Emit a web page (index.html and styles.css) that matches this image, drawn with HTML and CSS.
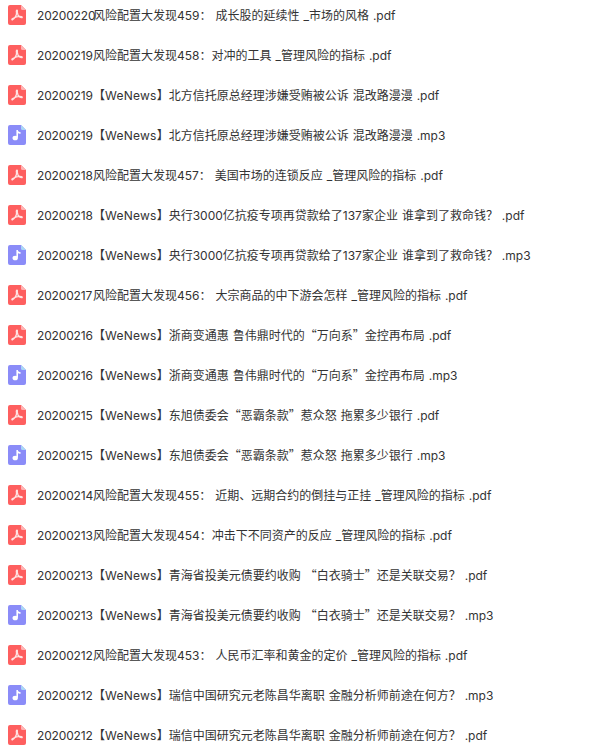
FILE: index.html
```html
<!DOCTYPE html>
<html lang="zh-CN">
<head>
    <meta charset="UTF-8">
    <meta name="viewport" content="width=device-width, initial-scale=1.0">
    <title>文件列表</title>
    <link rel="stylesheet" href="styles.css">
</head>
<body>
    <svg class="icon-defs" width="0" height="0">
        <symbol id="pdf-icon" viewBox="0 0 18 20">
            <path d="M2 0H13L18 5V18a2 2 0 0 1-2 2H2a2 2 0 0 1-2-2V2a2 2 0 0 1 2-2Z" fill="#fe5f5f"/>
            <path d="M13 0L18 5H14.5a1.5 1.5 0 0 1-1.5-1.5Z" fill="#ffb3b3"/>
            <path d="M9 5.2C8.3 5.2 8.2 6 8.5 7.6C8.7 8.8 8.2 10.4 7.3 11.9C6.4 13.4 5 14.6 4.2 15C3.6 14.6 3.8 14 4.7 13.5C6.5 12.6 9.5 11.4 11.6 11.4C13 11.4 14.3 11.8 14.2 12.4C14 12.9 12.9 12.7 12 12.2C10.6 11.3 9.4 9.4 9.3 7.4C9.3 6.4 9.6 5.2 9 5.2Z" fill="none" stroke="#ffe3e3" stroke-width="1.3" stroke-linejoin="round"/>
        </symbol>
        <symbol id="mp3-icon" viewBox="0 0 18 20">
            <path d="M2 0H13L18 5V18a2 2 0 0 1-2 2H2a2 2 0 0 1-2-2V2a2 2 0 0 1 2-2Z" fill="#8b8cf8"/>
            <path d="M13 0L18 5H14.5a1.5 1.5 0 0 1-1.5-1.5Z" fill="#a9d8f5"/>
            <path d="M9.2 5V12.4" stroke="#fff" stroke-width="1.6" fill="none"/>
            <path d="M9.2 5C10 6.6 11.4 6.8 12.6 7.2V8.8C11.4 8.6 10 8.2 9.2 7.4Z" fill="#fff"/>
            <ellipse cx="7.2" cy="13" rx="2.7" ry="2.3" fill="#fff"/>
        </symbol>
    </svg>

    <ul class="file-list">
        <li class="file-row"><svg class="file-icon"><use href="#pdf-icon"/></svg><span class="file-name"><span class="file-date">20200220</span>风险配置大发现459： 成长股的延续性 _市场的风格 .pdf</span></li>
        <li class="file-row"><svg class="file-icon"><use href="#pdf-icon"/></svg><span class="file-name"><span class="file-date">20200219</span>风险配置大发现458：对冲的工具 _管理风险的指标 .pdf</span></li>
        <li class="file-row"><svg class="file-icon"><use href="#pdf-icon"/></svg><span class="file-name"><span class="file-date">20200219</span>【<span class="tag">WeNews</span>】北方信托原总经理涉嫌受贿被公诉 混改路漫漫 .pdf</span></li>
        <li class="file-row"><svg class="file-icon"><use href="#mp3-icon"/></svg><span class="file-name"><span class="file-date">20200219</span>【<span class="tag">WeNews</span>】北方信托原总经理涉嫌受贿被公诉 混改路漫漫 .mp3</span></li>
        <li class="file-row"><svg class="file-icon"><use href="#pdf-icon"/></svg><span class="file-name"><span class="file-date">20200218</span>风险配置大发现457： 美国市场的连锁反应 _管理风险的指标 .pdf</span></li>
        <li class="file-row"><svg class="file-icon"><use href="#pdf-icon"/></svg><span class="file-name"><span class="file-date">20200218</span>【<span class="tag">WeNews</span>】央行3000亿抗疫专项再贷款给了137家企业 谁拿到了救命钱？ .pdf</span></li>
        <li class="file-row"><svg class="file-icon"><use href="#mp3-icon"/></svg><span class="file-name"><span class="file-date">20200218</span>【<span class="tag">WeNews</span>】央行3000亿抗疫专项再贷款给了137家企业 谁拿到了救命钱？ .mp3</span></li>
        <li class="file-row"><svg class="file-icon"><use href="#pdf-icon"/></svg><span class="file-name"><span class="file-date">20200217</span>风险配置大发现456： 大宗商品的中下游会怎样 _管理风险的指标 .pdf</span></li>
        <li class="file-row"><svg class="file-icon"><use href="#pdf-icon"/></svg><span class="file-name"><span class="file-date">20200216</span>【<span class="tag">WeNews</span>】浙商变通惠 鲁伟鼎时代的<span class="cjk-quote">“</span>万向系<span class="cjk-quote">”</span>金控再布局 .pdf</span></li>
        <li class="file-row"><svg class="file-icon"><use href="#mp3-icon"/></svg><span class="file-name"><span class="file-date">20200216</span>【<span class="tag">WeNews</span>】浙商变通惠 鲁伟鼎时代的<span class="cjk-quote">“</span>万向系<span class="cjk-quote">”</span>金控再布局 .mp3</span></li>
        <li class="file-row"><svg class="file-icon"><use href="#pdf-icon"/></svg><span class="file-name"><span class="file-date">20200215</span>【<span class="tag">WeNews</span>】东旭债委会<span class="cjk-quote">“</span>恶霸条款<span class="cjk-quote">”</span>惹众怒 拖累多少银行 .pdf</span></li>
        <li class="file-row"><svg class="file-icon"><use href="#mp3-icon"/></svg><span class="file-name"><span class="file-date">20200215</span>【<span class="tag">WeNews</span>】东旭债委会<span class="cjk-quote">“</span>恶霸条款<span class="cjk-quote">”</span>惹众怒 拖累多少银行 .mp3</span></li>
        <li class="file-row"><svg class="file-icon"><use href="#pdf-icon"/></svg><span class="file-name"><span class="file-date">20200214</span>风险配置大发现455： 近期、远期合约的倒挂与正挂 _管理风险的指标 .pdf</span></li>
        <li class="file-row"><svg class="file-icon"><use href="#pdf-icon"/></svg><span class="file-name"><span class="file-date">20200213</span>风险配置大发现454：冲击下不同资产的反应 _管理风险的指标 .pdf</span></li>
        <li class="file-row"><svg class="file-icon"><use href="#pdf-icon"/></svg><span class="file-name"><span class="file-date">20200213</span>【<span class="tag">WeNews</span>】青海省投美元债要约收购 <span class="cjk-quote">“</span>白衣骑士<span class="cjk-quote">”</span>还是关联交易？ .pdf</span></li>
        <li class="file-row"><svg class="file-icon"><use href="#mp3-icon"/></svg><span class="file-name"><span class="file-date">20200213</span>【<span class="tag">WeNews</span>】青海省投美元债要约收购 <span class="cjk-quote">“</span>白衣骑士<span class="cjk-quote">”</span>还是关联交易？ .mp3</span></li>
        <li class="file-row"><svg class="file-icon"><use href="#pdf-icon"/></svg><span class="file-name"><span class="file-date">20200212</span>风险配置大发现453： 人民币汇率和黄金的定价 _管理风险的指标 .pdf</span></li>
        <li class="file-row"><svg class="file-icon"><use href="#mp3-icon"/></svg><span class="file-name"><span class="file-date">20200212</span>【<span class="tag">WeNews</span>】瑞信中国研究元老陈昌华离职 金融分析师前途在何方？ .mp3</span></li>
        <li class="file-row"><svg class="file-icon"><use href="#pdf-icon"/></svg><span class="file-name"><span class="file-date">20200212</span>【<span class="tag">WeNews</span>】瑞信中国研究元老陈昌华离职 金融分析师前途在何方？ .pdf</span></li>
    </ul>
</body>
</html>
```

FILE: styles.css
```css
html, body {
    height: 753px;
    overflow: hidden;
}

body {
    margin: 0;
    background-color: #fff;
    color: #333;
    font-family: Inter, "Noto Sans CJK SC", sans-serif;
    font-size: 12px;
    word-spacing: 0.6px;
}

.icon-defs {
    display: block;
    height: 0;
}

.file-list {
    list-style: none;
    margin: 0;
    padding: 0 0 0 8px;
}

.file-row {
    display: flex;
    align-items: center;
    gap: 11px;
    height: 40px;
    margin-top: -5px;
    margin-bottom: 5px;
    white-space: nowrap;
}

.file-icon {
    flex: none;
    width: 18px;
    height: 20px;
}

.file-name {
    padding-bottom: 1px;
}

.file-date {
    display: inline-block;
    width: 56px;
    letter-spacing: -0.15px;
}

.tag {
    letter-spacing: 0.25px;
}

.cjk-quote {
    font-family: "Noto Sans CJK SC", sans-serif;
}
```
